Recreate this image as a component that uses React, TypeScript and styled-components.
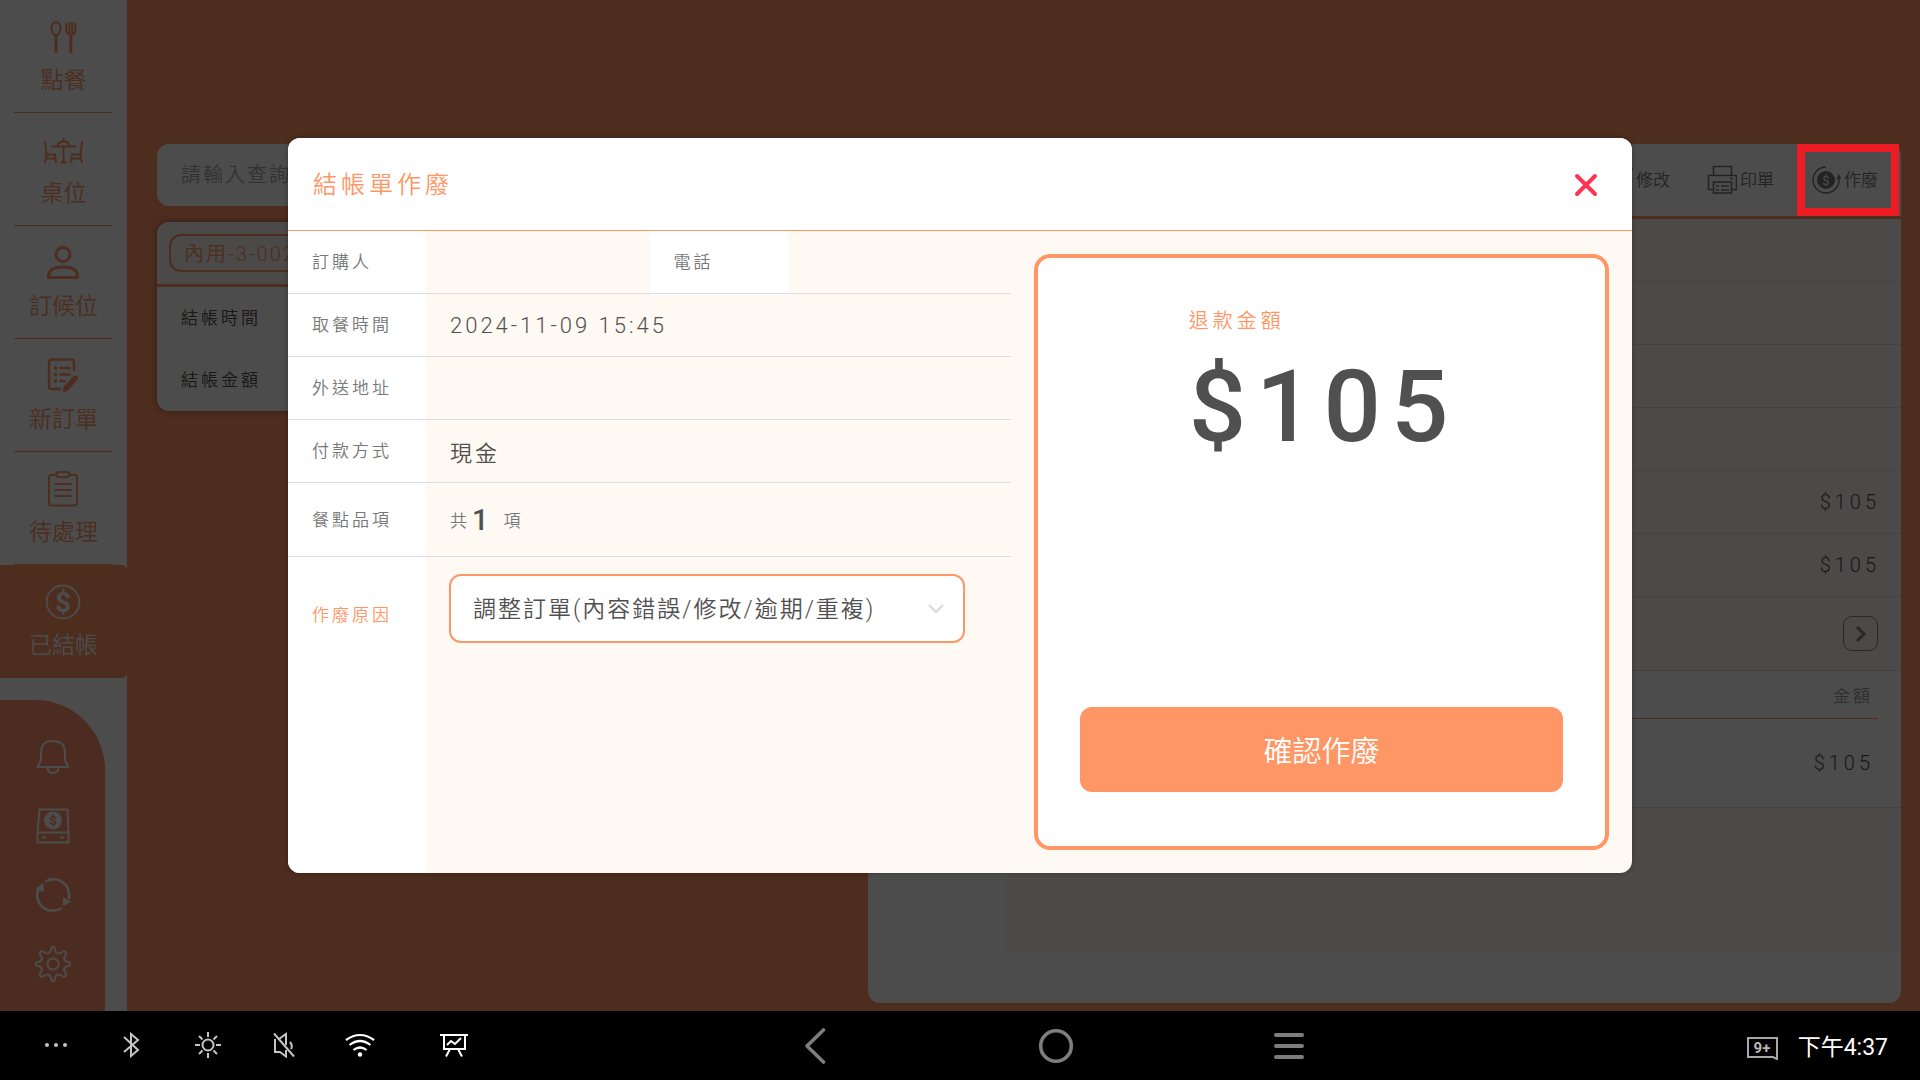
import React from "react";
import styled, { createGlobalStyle } from "styled-components";

const color = {
  orange: "#ff9665",
  coral: "#ff906b",
  cream: "#fff9f3",
  line: "#dadce6",
  ink: "#505050",
  label: "#777777",
  nav: "#7d7d7d",
};

const GlobalStyle = createGlobalStyle`
  *, *::before, *::after { box-sizing: border-box; }
  body {
    margin: 0;
    font-family: Roboto, "Noto Sans CJK TC", sans-serif;
    font-weight: 350;
    color: ${color.ink};
    background: #000;
  }
  button, input, select { font: inherit; color: inherit; letter-spacing: inherit; }
  button { border: 0; background: none; padding: 0; cursor: pointer; }
  svg { display: block; flex: none; }
`;

const Page = styled.div`
  min-height: 100vh;
  display: flex;
  flex-direction: column;
`;

const Screen = styled.div`
  position: relative;
  flex: 1;
  display: flex;
  background: ${color.orange};
`;

/* ---------- Sidebar ---------- */

const Sidebar = styled.nav`
  flex: 0 0 127px;
  display: flex;
  flex-direction: column;
  background: #fff;
`;

const SideItem = styled.button<{ $active?: boolean }>`
  display: flex;
  flex-direction: column;
  align-items: center;
  gap: 10px;
  height: 113px;
  padding-top: 19px;
  margin: ${(p) => (p.$active ? "0" : "0 14px")};
  border-bottom: ${(p) => (p.$active ? "0" : `1px solid ${color.orange}`)};
  border-radius: ${(p) => (p.$active ? "0 5px 5px 0" : "0")};
  background: ${(p) => (p.$active ? color.orange : "transparent")};
  color: ${(p) => (p.$active ? "#fff" : color.orange)};
  font-size: 23px;
  line-height: 32px;
  white-space: nowrap;
`;

const SideTools = styled.div`
  flex: 1;
  display: flex;
  flex-direction: column;
  align-items: center;
  gap: 33px;
  margin: 22px 22px 0 0;
  padding: 39px 0 28px;
  border-top-right-radius: 70px;
  background: ${color.coral};
  color: #fff;
`;

/* ---------- Background page ---------- */

const Main = styled.main`
  flex: 1;
  display: grid;
  grid-template-columns: 2fr 3fr;
  gap: 22px;
  padding: 144px 19px 8px 30px;
`;

const ListColumn = styled.section`
  display: flex;
  flex-direction: column;
  gap: 16px;
`;

const Search = styled.input`
  height: 62px;
  padding: 0 24px;
  border: 0;
  border-radius: 12px;
  background: #fff;
  font-size: 20px;
  letter-spacing: 2px;
  &::placeholder { color: #a8a8a8; opacity: 1; }
`;

const OrderCard = styled.article`
  border-radius: 12px;
  background: #fff;
  box-shadow: 0 0 6px rgba(0, 0, 0, 0.4);
  overflow: hidden;
`;

const OrderHead = styled.header`
  padding: 12px;
  border-bottom: 3px solid ${color.orange};
  background: ${color.cream};
`;

const OrderTag = styled.div`
  height: 38px;
  padding: 0 13px;
  border: 2px solid ${color.orange};
  border-radius: 12px;
  color: ${color.orange};
  font-size: 20px;
  line-height: 36px;
  letter-spacing: 2px;
`;

const OrderLine = styled.div`
  height: 62px;
  padding: 0 24px;
  font-size: 17px;
  line-height: 62px;
  letter-spacing: 3px;
`;

const Detail = styled.section`
  display: flex;
  flex-direction: column;
  border-radius: 12px;
  background: #fff;
`;

const Toolbar = styled.header`
  display: flex;
  justify-content: flex-end;
  align-items: center;
  gap: 37px;
  height: 75px;
  padding-right: 23px;
  border-bottom: 3px solid ${color.orange};
`;

const ToolButton = styled.button`
  display: flex;
  align-items: center;
  gap: 3px;
  font-size: 17px;
  line-height: 24px;
  color: #777;
`;

const DetailRow = styled.div<{ $tall?: boolean }>`
  display: flex;
  justify-content: flex-end;
  align-items: center;
  height: ${(p) => (p.$tall ? 74 : 63)}px;
  margin-left: 138px;
  padding-right: ${(p) => (p.$tall ? 23 : 21)}px;
  border-bottom: 1px solid ${color.line};
  background: ${color.cream};
  font-size: 20px;
  letter-spacing: 4px;
`;

const MoreButton = styled.button`
  display: grid;
  place-items: center;
  width: 35px;
  height: 35px;
  border: 1px solid #888;
  border-radius: 9px;
`;

const ItemsWrap = styled.div`
  padding: 0 23px;
  border-bottom: 1px solid ${color.line};
`;

const Items = styled.table`
  width: 100%;
  border-collapse: separate;
  border-spacing: 0;
  text-align: right;
  th {
    height: 48px;
    padding: 0 5px;
    border-bottom: 1px solid ${color.orange};
    font-size: 17px;
    font-weight: 350;
    letter-spacing: 3px;
    color: #999;
  }
  td {
    height: 88px;
    padding: 0 4px;
    font-size: 20px;
    letter-spacing: 4px;
  }
`;

const DetailFill = styled.div`
  flex: 1;
  margin: 0 0 51px 138px;
  background: ${color.cream};
`;

/* ---------- Dialog ---------- */

const Overlay = styled.div`
  position: absolute;
  inset: 0;
  display: flex;
  align-items: center;
  justify-content: center;
  background: rgba(0, 0, 0, 0.7);
`;

const Highlight = styled.div`
  position: absolute;
  top: 144px;
  right: 21px;
  width: 102px;
  height: 72px;
  border: 8px solid #ed1c24;
`;

const Dialog = styled.section`
  width: 70%;
  border-radius: 12px;
  background: ${color.cream};
  box-shadow: 0 0 4px rgba(0, 0, 0, 0.3);
  overflow: hidden;
`;

const DialogHead = styled.header`
  display: flex;
  align-items: center;
  justify-content: space-between;
  height: 93px;
  padding: 2px 34px 0 25px;
  border-bottom: 1px solid ${color.orange};
  background: #fff;
`;

const DialogTitle = styled.h1`
  margin: 0;
  font-size: 24px;
  font-weight: 350;
  line-height: 32px;
  letter-spacing: 4px;
  color: ${color.orange};
`;

const DialogBody = styled.div`
  display: flex;
  min-height: 642px;
`;

const Form = styled.div`
  flex: 1;
  display: flex;
  flex-direction: column;
`;

const FormRow = styled.div<{ $tall?: boolean; $fill?: boolean }>`
  display: flex;
  ${(p) =>
    p.$fill
      ? "flex: 1;"
      : `height: ${p.$tall ? 74 : 63}px; border-bottom: 1px solid ${color.line};`}
`;

const FormLabel = styled.label<{ $accent?: boolean }>`
  flex: 0 0 138px;
  display: flex;
  align-items: ${(p) => (p.$accent ? "flex-start" : "center")};
  padding: ${(p) => (p.$accent ? "46px 0 0 24px" : "0 0 0 24px")};
  background: #fff;
  font-size: 17px;
  line-height: 24px;
  letter-spacing: 3px;
  color: ${(p) => (p.$accent ? color.orange : color.label)};
`;

const FormValue = styled.div`
  flex: 1;
  display: flex;
  align-items: center;
  padding-left: 24px;
  font-size: 22px;
  letter-spacing: 3px;
`;

const Unit = styled.span`
  font-size: 17px;
  color: ${color.label};
`;

const Count = styled.strong`
  margin: 0 12px 0 2px;
  font-size: 29px;
  font-weight: 500;
`;

const SelectWrap = styled.div`
  position: relative;
  flex: 1;
  height: 69px;
  margin: 17px 46px 0 23px;
  svg {
    position: absolute;
    right: 21px;
    top: 29px;
    pointer-events: none;
  }
`;

const Select = styled.select`
  appearance: none;
  width: 100%;
  height: 100%;
  padding: 2px 48px 0 22px;
  border: 2px solid ${color.orange};
  border-radius: 12px;
  background: #fff;
  color: ${color.ink};
  font-size: 23px;
  letter-spacing: 2px;
`;

const Refund = styled.aside`
  flex: 0 0 575px;
  display: flex;
  flex-direction: column;
  align-items: center;
  margin: 23px;
  padding: 49px 42px 54px;
  border: 4px solid ${color.orange};
  border-radius: 16px;
  background: #fff;
`;

const RefundTotal = styled.div`
  padding-left: 4px;
`;

const RefundLabel = styled.div`
  font-size: 20px;
  line-height: 28px;
  letter-spacing: 4px;
  color: ${color.orange};
`;

const RefundAmount = styled.div`
  margin-top: 12px;
  font-size: 101px;
  font-weight: 500;
  line-height: 120px;
  letter-spacing: 10px;
`;

const Confirm = styled.button`
  align-self: stretch;
  height: 85px;
  margin-top: auto;
  padding-bottom: 2px;
  border-radius: 12px;
  background: ${color.orange};
  color: #fff;
  font-size: 29px;
`;

/* ---------- System bar ---------- */

const SystemBar = styled.footer`
  display: grid;
  grid-template-columns: 795fr 514fr 611fr;
  align-items: center;
  height: 69px;
  background: #000;
`;

const StatusIcons = styled.div`
  display: grid;
  grid-template-columns: repeat(5, 76px) 112px;
  justify-items: center;
  align-items: center;
  padding: 0 0 2px 18px;
  color: #c4c4c4;
`;

const NavKeys = styled.div`
  display: grid;
  grid-template-columns: 241fr 233fr 40px;
  justify-items: start;
  color: ${color.nav};
`;

const Clock = styled.div`
  display: flex;
  justify-content: flex-end;
  align-items: center;
  gap: 20px;
  padding: 4px 32px 0 0;
  color: #fff;
  font-size: 23px;
  line-height: 32px;
  font-weight: 400;
`;

/* ---------- Icons ---------- */

type IconProps = { w?: number; h?: number; sw?: number; stroke?: string; children: React.ReactNode };

const Icon = ({ w = 36, h = 36, sw = 2, stroke = "currentColor", children }: IconProps) => (
  <svg width={w} height={h} viewBox={`0 0 ${w} ${h}`} fill="none" stroke={stroke} strokeWidth={sw} aria-hidden="true">
    {children}
  </svg>
);

type DollarProps = { x: number; y: number; size: number; weight?: number; fill?: string };

const Dollar = ({ x, y, size, weight = 700, fill = "currentColor" }: DollarProps) => (
  <text x={x} y={y} fontSize={size} fontWeight={weight} textAnchor="middle" fill={fill} stroke="none">
    $
  </text>
);

const Cutlery = () => (
  <Icon>
    <ellipse cx="10" cy="9.500" rx="4.600" ry="6.600" />
    <path d="M10 16v18" strokeWidth="3" />
    <path d="M24.800 16v18" strokeWidth="3" />
    <path d="M20.300 4v7q0 4.500 4.500 4.500T29.300 11V4M23.400 3v11M26.200 3v11" />
  </Icon>
);

const DiningTable = () => (
  <Icon w={40}>
    <path d="M7 14.500h25M19.500 14.500V30M16.500 30.500h6M13.500 14q1-4.500 6-4.500t6 4.500M19.500 9V6" />
    <path d="M1 9.500L2.500 23l-1.500 8M2.500 22.500h8.500l1 8.500M2.500 26.500h9" />
    <path d="M38 9.500L36.500 23l1.500 8M36.500 22.500H28L27 31M36.500 26.500h-9" />
  </Icon>
);

const Person = () => (
  <Icon sw={3}>
    <circle cx="17" cy="9.500" r="7" />
    <path d="M2.500 32.500v-2Q3.500 22 17 22t14.500 8.500v2z" strokeLinejoin="round" />
  </Icon>
);

const Note = () => (
  <Icon sw={2.4}>
    <path d="M28 13V4.500Q28 1.500 25 1.500H6Q3 1.500 3 4.500v24Q3 31 6 31h9" />
    <path d="M13.500 10h11M13.500 16.500h11M13.500 23h6" />
    <path d="M8 10h3M8 16.500h3M8 23h3" strokeWidth="3.400" />
    <path d="M30 17.500q3 1 1.500 4L22.500 32l-5.500 3 .5-6L27 18.500q1.500-1.500 3-1z" fill="currentColor" stroke="none" />
  </Icon>
);

const Clipboard = () => (
  <Icon>
    <path d="M10 4H5.500Q3 4 3 6.500V32q0 2.500 2.500 2.500h23Q31 34.500 31 32V6.500Q31 4 28.500 4H23" />
    <rect x="10.500" y="1" width="13" height="5" rx="2.500" />
    <path d="M8.500 13h17M8.500 19h17M8.500 25h17" />
  </Icon>
);

const Paid = () => (
  <Icon>
    <circle cx="17" cy="18" r="16.400" />
    <Dollar x={17} y={28} size={28} />
  </Icon>
);

const Bell = () => (
  <Icon>
    <path d="M2.500 28L6 21.500V14Q6 2 18 2t12 12v7.500L33.500 28zM12.500 28q0 6 5.500 6t5.500-6" strokeLinejoin="round" />
  </Icon>
);

const CashDrawer = () => (
  <Icon>
    <path d="M4.500 1.500h28L33.500 24v10.500h-31V24zM2.500 24.500h31M7 29.500h4M25 29.500h4" />
    <circle cx="18" cy="12.500" r="9" fill="currentColor" stroke="none" />
    <Dollar x={18} y={17} size={13} fill={color.coral} />
  </Icon>
);

const Sync = () => (
  <Icon sw={2.600}>
    <path d="M10.500 4.500A15.500 15.500 0 0 1 33.500 22M26.500 31A15.500 15.500 0 0 1 3.500 12" />
    <path d="M.5 11.500L8.500 6v9zM36 25l-8-5v9z" fill="currentColor" stroke="none" />
  </Icon>
);

const Gear = () => (
  <Icon>
    <circle cx="18" cy="18" r="5.600" />
    <path
      d="M18 1q2 0 2 2.500 .5 4 3.500 4 2 0 3.500-1.500 2-1.500 3.500 0t0 3.500q-1.500 1.500-1.500 3 .5 3 4 3.500 2.500 0 2.500 2t-2.500 2q-3.500 .5-4 3.500 0 1.500 1.500 3 1.500 2 0 3.500t-3.500 0q-1.500-1.500-3.500-1.500-3 0-3.500 4Q20 35 18 35t-2-2.500q-.5-4-3.500-4-2 0-3.500 1.500-2 1.500-3.500 0t0-3.500Q7 25 7 23.500 6.500 20.500 3 20 .5 20 .5 18T3 16q3.500-.5 4-3.500Q7 11 5.500 9.500q-1.500-2 0-3.500T9 6q1.500 1.500 3.500 1.500 3 0 3.500-4Q16 1 18 1z"
      strokeLinejoin="round"
    />
  </Icon>
);

const Pencil = () => (
  <Icon w={30} h={30} sw={1.6}>
    <path d="M25 15v12H3V5h13M27 2l2 2-14 14-4 1 1-4z" />
  </Icon>
);

const Printer = () => (
  <Icon w={30} h={30} sw={1.6}>
    <path d="M6.500 10.500v-9h18v9M6 24.500H1.500v-14h28v14H25M6.500 17h18v11h-18zM9 21h3M14 21h8M9 25h3M14 25h8M23 13.500h3" />
  </Icon>
);

const VoidIcon = () => (
  <Icon w={30} h={30} sw={1.4}>
    <path d="M15 2A13 13 0 1 0 28 14" />
    <path d="M25.500 14.500L27.500 9l3 4.500z" fill="currentColor" stroke="none" />
    <circle cx="15" cy="15" r="9" fill="currentColor" stroke="none" />
    <Dollar x={15} y={20} size={13} weight={400} fill="#fff" />
  </Icon>
);

const sideItems = [
  { text: "點餐", icon: <Cutlery /> },
  { text: "桌位", icon: <DiningTable /> },
  { text: "訂候位", icon: <Person /> },
  { text: "新訂單", icon: <Note /> },
  { text: "待處理", icon: <Clipboard /> },
  { text: "已結帳", icon: <Paid />, active: true },
];

export default function App() {
  return (
    <Page>
      <GlobalStyle />
      <Screen>
        <Sidebar>
          {sideItems.map((item) => (
            <SideItem key={item.text} $active={item.active}>
              {item.icon}
              {item.text}
            </SideItem>
          ))}
          <SideTools>
            <button aria-label="通知"><Bell /></button>
            <button aria-label="錢櫃"><CashDrawer /></button>
            <button aria-label="同步"><Sync /></button>
            <button aria-label="設定"><Gear /></button>
          </SideTools>
        </Sidebar>

        <Main>
          <ListColumn>
            <Search aria-label="查詢" placeholder="請輸入查詢" />
            <OrderCard>
              <OrderHead>
                <OrderTag>內用-3-002</OrderTag>
              </OrderHead>
              <OrderLine>結帳時間</OrderLine>
              <OrderLine>結帳金額</OrderLine>
            </OrderCard>
          </ListColumn>

          <Detail>
            <Toolbar>
              <ToolButton><Pencil />修改</ToolButton>
              <ToolButton><Printer />印單</ToolButton>
              <ToolButton><VoidIcon />作廢</ToolButton>
            </Toolbar>
            <DetailRow />
            <DetailRow />
            <DetailRow />
            <DetailRow />
            <DetailRow>$105</DetailRow>
            <DetailRow>$105</DetailRow>
            <DetailRow $tall>
              <MoreButton aria-label="展開">
                <Icon w={12} h={18} sw={3} stroke="#888"><path d="M2 2l7 7-7 7" /></Icon>
              </MoreButton>
            </DetailRow>
            <ItemsWrap>
              <Items>
                <thead><tr><th>金額</th></tr></thead>
                <tbody><tr><td>$105</td></tr></tbody>
              </Items>
            </ItemsWrap>
            <DetailFill />
          </Detail>
        </Main>

        <Overlay>
          <Highlight />
          <Dialog role="dialog" aria-labelledby="dialog-title">
            <DialogHead>
              <DialogTitle id="dialog-title">結帳單作廢</DialogTitle>
              <button aria-label="關閉">
                <Icon w={24} h={24} sw={4} stroke="#ff3352">
                  <path d="M3 3l18 18M21 3L3 21" strokeLinecap="round" />
                </Icon>
              </button>
            </DialogHead>
            <DialogBody>
              <Form>
                <FormRow>
                  <FormLabel as="div">訂購人</FormLabel>
                  <FormValue />
                  <FormLabel as="div">電話</FormLabel>
                  <FormValue />
                </FormRow>
                <FormRow>
                  <FormLabel as="div">取餐時間</FormLabel>
                  <FormValue>2024-11-09 15:45</FormValue>
                </FormRow>
                <FormRow>
                  <FormLabel as="div">外送地址</FormLabel>
                  <FormValue />
                </FormRow>
                <FormRow>
                  <FormLabel as="div">付款方式</FormLabel>
                  <FormValue>現金</FormValue>
                </FormRow>
                <FormRow $tall>
                  <FormLabel as="div">餐點品項</FormLabel>
                  <FormValue>
                    <Unit>共</Unit>
                    <Count>1</Count>
                    <Unit>項</Unit>
                  </FormValue>
                </FormRow>
                <FormRow $fill>
                  <FormLabel $accent htmlFor="reason">作廢原因</FormLabel>
                  <SelectWrap>
                    <Select id="reason">
                      <option>調整訂單(內容錯誤/修改/逾期/重複)</option>
                    </Select>
                    <Icon w={16} h={12} stroke="#d9d9d9"><path d="M1 2l7 7 7-7" /></Icon>
                  </SelectWrap>
                </FormRow>
              </Form>
              <Refund>
                <RefundTotal>
                  <RefundLabel>退款金額</RefundLabel>
                  <RefundAmount>$105</RefundAmount>
                </RefundTotal>
                <Confirm>確認作廢</Confirm>
              </Refund>
            </DialogBody>
          </Dialog>
        </Overlay>
      </Screen>

      <SystemBar>
        <StatusIcons>
          <Icon w={24} h={24}>
            <g fill="currentColor" stroke="none">
              <circle cx="3" cy="12" r="2" /><circle cx="12" cy="12" r="2" /><circle cx="21" cy="12" r="2" />
            </g>
          </Icon>
          <Icon w={18} h={26}><path d="M1 5l14 13-7 6V2l7 6L1 20" /></Icon>
          <Icon w={28} h={28}>
            <circle cx="14" cy="14" r="5.500" />
            <path d="M14 1v5M14 22v5M1 14h5M22 14h5M5 5l3.500 3.500M19.500 19.500L23 23M23 5l-3.500 3.500M8.500 19.500L5 23" />
          </Icon>
          <Icon w={22} h={26}>
            <path d="M1 1.500l20 23M2 7v13h5l6 4.500V18M6 7l7-5v11M17 10q3 3.500 1 7" />
          </Icon>
          <Icon w={30} h={26} sw={2.200} stroke="#fff">
            <path d="M1 8q14-10 28 0M4.500 13q10.500-8 21 0M8.500 18q6.500-5 13 0" />
            <circle cx="15" cy="22.500" r="2.200" fill="#fff" stroke="none" />
          </Icon>
          <Icon w={28} h={26} stroke="#fff">
            <path d="M0 3h28M4 3v14h21V3M10 17l-4 7.500M18 17l4 7.500M7 13l4-4 4 3 6-6" />
          </Icon>
        </StatusIcons>
        <NavKeys>
          <button aria-label="返回">
            <Icon w={40} h={40} sw={3.600}><path d="M28.500 4L12 20l16.500 16" strokeLinecap="round" strokeLinejoin="round" /></Icon>
          </button>
          <button aria-label="主畫面">
            <Icon w={40} h={40} sw={3.600}><circle cx="20" cy="20" r="15.300" /></Icon>
          </button>
          <button aria-label="選單">
            <Icon w={40} h={40} sw={4}><path d="M7 9h26M7 20h26M7 31h26" strokeLinecap="round" /></Icon>
          </button>
        </NavKeys>
        <Clock>
          <svg width="32" height="24" viewBox="0 0 32 24" fill="none" stroke="#a8a8a8" strokeWidth="2" role="img" aria-label="9+">
            <path d="M2 2h29v21l-4-2H2z" />
            <text x="16" y="17" textAnchor="middle" fontSize="15" fontWeight="700" fill="#b8b8b8" stroke="none">9+</text>
          </svg>
          <span>下午4:37</span>
        </Clock>
      </SystemBar>
    </Page>
  );
}
